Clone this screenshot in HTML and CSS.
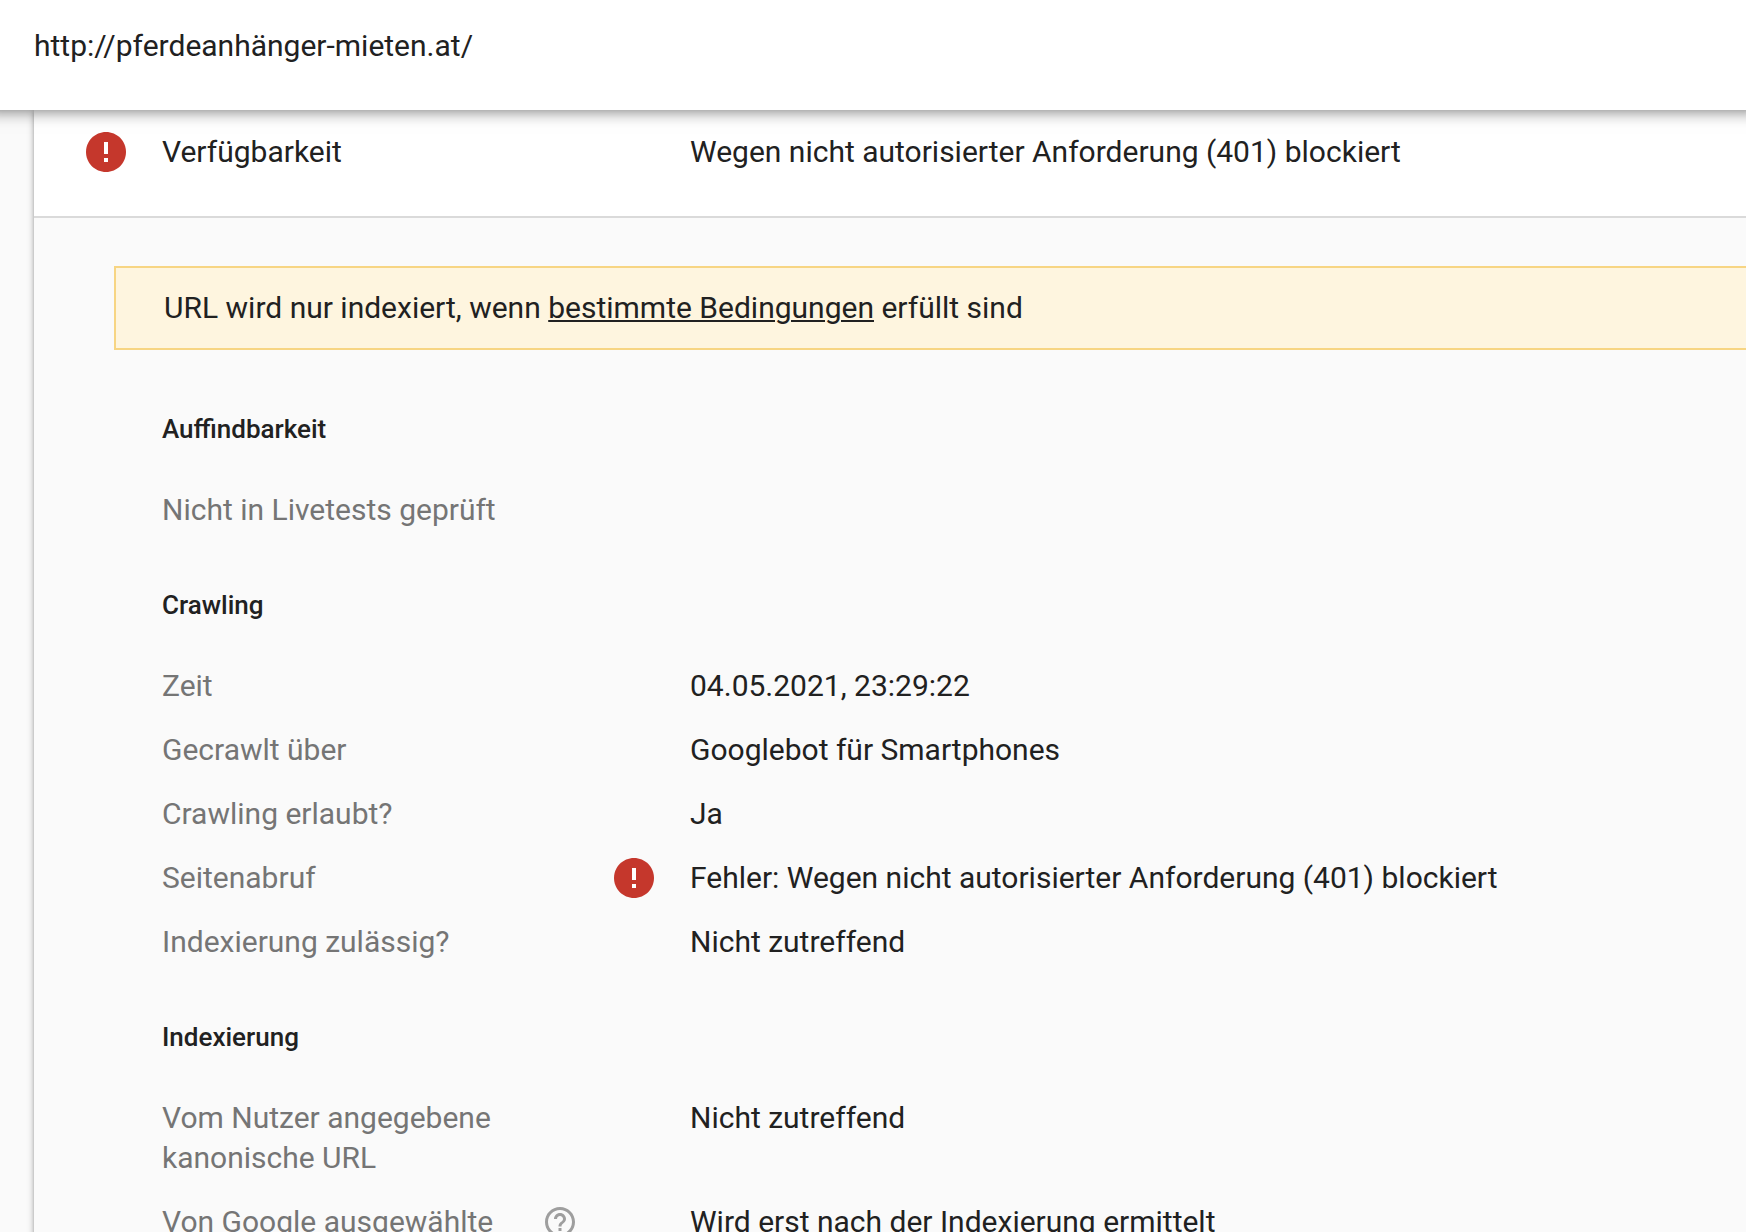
FILE: index.html
```
<!DOCTYPE html>
<html lang="de">
<head>
    <meta charset="UTF-8">
    <meta name="viewport" content="width=device-width, initial-scale=1.0">
    <title>URL-Prüfung</title>
    <link rel="stylesheet" href="styles.css">
</head>
<body>
    <header class="url-bar">http://pferdeanhänger-mieten.at/</header>

    <main class="card">
        <div class="status">
            <svg class="icon-error" viewBox="0 0 24 24" aria-hidden="true">
                <path d="M12 2C6.48 2 2 6.48 2 12s4.48 10 10 10 10-4.48 10-10S17.52 2 12 2z"/>
                <path class="mark" d="M11 7h2v6h-2zM11 15h2v2h-2z"/>
            </svg>
            <span class="status-name">Verfügbarkeit</span>
            <span class="status-value">Wegen nicht autorisierter Anforderung (401) blockiert</span>
        </div>

        <div class="details">
            <p class="notice">URL wird nur indexiert, wenn <a href="#">bestimmte Bedingungen</a> erfüllt sind</p>

            <section class="group">
                <h2>Auffindbarkeit</h2>
                <p class="muted">Nicht in Livetests geprüft</p>
            </section>

            <section class="group">
                <h2>Crawling</h2>
                <dl>
                    <div class="row">
                        <dt>Zeit</dt>
                        <dd>04.05.2021, 23:29:22</dd>
                    </div>
                    <div class="row">
                        <dt>Gecrawlt über</dt>
                        <dd>Googlebot für Smartphones</dd>
                    </div>
                    <div class="row">
                        <dt>Crawling erlaubt?</dt>
                        <dd>Ja</dd>
                    </div>
                    <div class="row">
                        <dt>Seitenabruf</dt>
                        <dd>
                            <svg class="icon-error" viewBox="0 0 24 24" aria-hidden="true">
                                <path d="M12 2C6.48 2 2 6.48 2 12s4.48 10 10 10 10-4.48 10-10S17.52 2 12 2z"/>
                                <path class="mark" d="M11 7h2v6h-2zM11 15h2v2h-2z"/>
                            </svg>
                            Fehler: Wegen nicht autorisierter Anforderung (401) blockiert
                        </dd>
                    </div>
                    <div class="row">
                        <dt>Indexierung zulässig?</dt>
                        <dd>Nicht zutreffend</dd>
                    </div>
                </dl>
            </section>

            <section class="group">
                <h2>Indexierung</h2>
                <dl>
                    <div class="row">
                        <dt>Vom Nutzer angegebene kanonische URL</dt>
                        <dd>Nicht zutreffend</dd>
                    </div>
                    <div class="row">
                        <dt>Von Google ausgewählte</dt>
                        <dd>
                            <button class="help" type="button" aria-label="Hilfe">
                                <svg viewBox="0 0 24 24" aria-hidden="true">
                                    <path d="M11 18h2v-2h-2v2zm1-16C6.48 2 2 6.48 2 12s4.48 10 10 10 10-4.48 10-10S17.52 2 12 2zm0 18c-4.41 0-8-3.59-8-8s3.59-8 8-8 8 3.59 8 8-3.59 8-8 8zm0-14c-2.21 0-4 1.79-4 4h2c0-1.1.9-2 2-2s2 .9 2 2c0 2-3 1.75-3 5h2c0-2.25 3-2.5 3-5 0-2.21-1.79-4-4-4z"/>
                                </svg>
                            </button>
                            Wird erst nach der Indexierung ermittelt
                        </dd>
                    </div>
                </dl>
            </section>
        </div>
    </main>
</body>
</html>
```
FILE: styles.css
```
* {
    box-sizing: border-box;
}

body {
    margin: 0;
    height: 100vh;
    overflow: hidden; /* The card runs on below the window */
    background-color: #fafafa;
    color: #212121;
    font-family: Roboto, sans-serif;
    font-size: 30px;
    line-height: 40px;
    font-variant-ligatures: no-common-ligatures;
}

h2, p, dl, dd {
    margin: 0;
}

/* Header with the inspected URL */
.url-bar {
    position: relative;
    z-index: 1;
    padding: 26px 34px 44px;
    background-color: #fff;
    box-shadow: 0 -16px 16px 16px rgba(0, 0, 0, 0.6);
}

.card {
    margin-left: 34px;
    background-color: #fafafa;
    box-shadow: 0 2px 4px rgba(0, 0, 0, 0.25), 0 0 8px rgba(0, 0, 0, 0.2);
}

.status {
    display: flex;
    align-items: center;
    height: 108px;
    padding: 22px 48px 44px;
    background-color: #fff;
    border-bottom: 2px solid #dadada;
}

.status-name {
    width: 528px;
    margin-left: 32px;
}

.icon-error {
    flex: none;
    width: 48px;
    height: 48px;
    fill: #c5372c;
}

.icon-error .mark {
    fill: #fff;
}

/* Expanded part of the card */
.details {
    padding: 48px 0 48px 80px;
}

.notice {
    padding: 20px 48px;
    background-color: #fef5df;
    border: 2px solid #f7d583;
    border-right: none;
}

.notice a {
    color: inherit;
    text-underline-offset: 2px;
    text-decoration-thickness: 2px;
}

.group {
    margin-top: 55px;
    padding-left: 48px;
}

.notice + .group {
    margin-top: 59px;
}

.group h2 {
    margin-bottom: 41px;
    font-size: 26px;
    font-weight: 500;
    line-height: 40px;
    font-variant-ligatures: normal;
}

.muted, dt {
    color: #757575;
}

.row {
    display: grid;
    grid-template-columns: 368px 1fr;
    column-gap: 160px;
}

.row + .row {
    margin-top: 24px;
}

dd {
    position: relative;
}

/* Icons hang in the gap to the left of the value */
dd .icon-error {
    position: absolute;
    top: -4px;
    left: -80px;
}

.help {
    position: absolute;
    top: 2px;
    left: -148px;
    width: 36px;
    height: 36px;
    padding: 0;
    border: none;
    background: none;
    cursor: pointer;
}

.help svg {
    display: block;
    fill: #9e9e9e;
}
```
